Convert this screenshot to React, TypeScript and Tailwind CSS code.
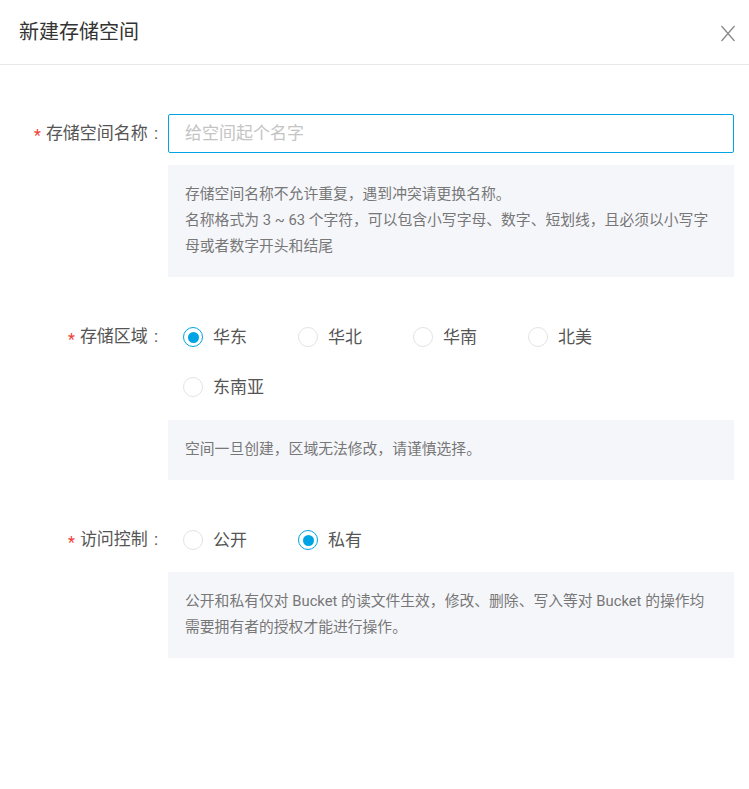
import React from "react";

const font = { fontFamily: 'Roboto, "Noto Sans CJK SC", sans-serif' };

function Radio({ label, checked }: { label: string; checked?: boolean }) {
  return (
    <div className="flex h-[50px] w-[115px] items-center">
      <span
        className={
          "flex h-[20px] w-[20px] shrink-0 items-center justify-center rounded-full border bg-white " +
          (checked ? "border-[#00a4e4]" : "border-[#e3e3e3]")
        }
      >
        {checked && <span className="h-[11px] w-[11px] rounded-full bg-[#00a4e4]" />}
      </span>
      <span className="ml-[10px] text-[17px] leading-none text-[#555]">{label}</span>
    </div>
  );
}

function Label({ text }: { text: string }) {
  return (
    <div className="flex w-[168px] shrink-0 items-center justify-end pr-[10px] text-[17px] text-[#555]">
      <span className="mr-[5px] mt-[5px] text-[16px] leading-none text-[#f04134]">*</span>
      <span>{text}</span>
      <span className="ml-[6px]">:</span>
    </div>
  );
}

function Help({ children }: { children: React.ReactNode }) {
  return (
    <div className="bg-[#f5f6fa] px-[17px] pb-[18px] pt-4 text-[14.8px] leading-[26px] text-[#777]">
      {children}
    </div>
  );
}

export default function App() {
  return (
    <div className="min-h-[789px] w-[749px] bg-white" style={font}>
      <div className="flex h-[65px] items-center justify-between border-b border-[#e8e8e8] pl-[19px] pr-[13px]">
        <span className="text-[20px] text-[#333]">新建存储空间</span>
        <svg width="16" height="17" viewBox="0 0 16 17" className="mt-[2px]">
          <path d="M1.5 1 L14.5 16 M14.5 1 L1.5 16" stroke="#8a8a8a" strokeWidth="1.3" fill="none" />
        </svg>
      </div>

      <div className="pr-[15px] pt-[49px]">
        {/* name */}
        <div className="flex">
          <div className="flex h-[39px] items-center">
            <Label text="存储空间名称" />
          </div>
          <div className="flex-1">
            <div className="flex h-[39px] items-center rounded-[2px] border border-[#00a4e4] px-4 text-[17px] text-[#c4c4c4]">
              给空间起个名字
            </div>
            <div className="mt-[12px]">
              <Help>
                <div>存储空间名称不允许重复，遇到冲突请更换名称。</div>
                <div>名称格式为 3 ~ 63 个字符，可以包含小写字母、数字、短划线，且必须以小写字母或者数字开头和结尾</div>
              </Help>
            </div>
          </div>
        </div>

        {/* region */}
        <div className="mt-[35px] flex">
          <div className="flex h-[50px] items-center">
            <Label text="存储区域" />
          </div>
          <div className="flex-1">
            <div className="flex flex-wrap pl-[15px]">
              <Radio label="华东" checked />
              <Radio label="华北" />
              <Radio label="华南" />
              <Radio label="北美" />
              <Radio label="东南亚" />
            </div>
            <div className="mt-[8px]">
              <Help>
                <div>空间一旦创建，区域无法修改，请谨慎选择。</div>
              </Help>
            </div>
          </div>
        </div>

        {/* access */}
        <div className="mt-[35px] flex">
          <div className="flex h-[50px] items-center">
            <Label text="访问控制" />
          </div>
          <div className="flex-1">
            <div className="flex flex-wrap pl-[15px]">
              <Radio label="公开" />
              <Radio label="私有" checked />
            </div>
            <div className="mt-[7px]">
              <Help>
                <div>公开和私有仅对 Bucket 的读文件生效，修改、删除、写入等对 Bucket 的操作均需要拥有者的授权才能进行操作。</div>
              </Help>
            </div>
          </div>
        </div>
      </div>
    </div>
  );
}
